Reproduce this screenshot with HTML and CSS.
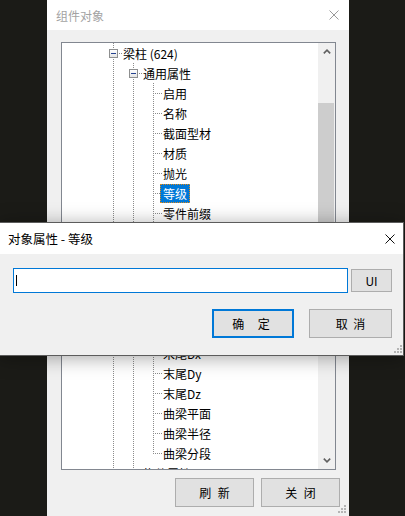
FILE: index.html
```html
<!DOCTYPE html>
<html lang="zh">
<head>
<meta charset="utf-8">
<title>对象属性</title>
<link rel="stylesheet" href="styles.css">
</head>
<body>
<div class="desk">
  <section class="win win-bg">
    <header class="titlebar">
      <span class="title">组件对象</span>
      <svg class="xbtn" width="10" height="10" viewBox="0 0 10 10"><path d="M0.5 0.5L9.5 9.5M9.5 0.5L0.5 9.5" stroke="#9a9a9a" stroke-width="1" fill="none"/></svg>
    </header>
    <div class="bg-body">
      <div class="tree">
        <div class="rows">
          <div class="row"><span class="c bx"><i class="exp"></i></span><span class="lbl">梁柱 (624)</span></div>
          <div class="row"><span class="c v"></span><span class="c bx"><i class="exp"></i></span><span class="lbl">通用属性</span></div>
          <div class="row"><span class="c v"></span><span class="c v"></span><span class="c t"></span><span class="lbl">启用</span></div>
          <div class="row"><span class="c v"></span><span class="c v"></span><span class="c t"></span><span class="lbl">名称</span></div>
          <div class="row"><span class="c v"></span><span class="c v"></span><span class="c t"></span><span class="lbl">截面型材</span></div>
          <div class="row"><span class="c v"></span><span class="c v"></span><span class="c t"></span><span class="lbl">材质</span></div>
          <div class="row"><span class="c v"></span><span class="c v"></span><span class="c t"></span><span class="lbl">抛光</span></div>
          <div class="row"><span class="c v"></span><span class="c v"></span><span class="c t"></span><span class="lbl sel">等级</span></div>
          <div class="row"><span class="c v"></span><span class="c v"></span><span class="c t"></span><span class="lbl">零件前缀</span></div>
          <div class="row"><span class="c v"></span><span class="c v"></span><span class="c t"></span><span class="lbl">零件编号</span></div>
          <div class="row"><span class="c v"></span><span class="c v"></span><span class="c t"></span><span class="lbl">构件前缀</span></div>
          <div class="row"><span class="c v"></span><span class="c v"></span><span class="c t"></span><span class="lbl">构件编号</span></div>
          <div class="row"><span class="c v"></span><span class="c v"></span><span class="c t"></span><span class="lbl">起点Dx</span></div>
          <div class="row"><span class="c v"></span><span class="c v"></span><span class="c t"></span><span class="lbl">起点Dy</span></div>
          <div class="row"><span class="c v"></span><span class="c v"></span><span class="c t"></span><span class="lbl">起点Dz</span></div>
          <div class="row"><span class="c v"></span><span class="c v"></span><span class="c t"></span><span class="lbl">末尾Dx</span></div>
          <div class="row"><span class="c v"></span><span class="c v"></span><span class="c t"></span><span class="lbl">末尾Dy</span></div>
          <div class="row"><span class="c v"></span><span class="c v"></span><span class="c t"></span><span class="lbl">末尾Dz</span></div>
          <div class="row"><span class="c v"></span><span class="c v"></span><span class="c t"></span><span class="lbl">曲梁平面</span></div>
          <div class="row"><span class="c v"></span><span class="c v"></span><span class="c t"></span><span class="lbl">曲梁半径</span></div>
          <div class="row"><span class="c v"></span><span class="c v"></span><span class="c l"></span><span class="lbl">曲梁分段</span></div>
          <div class="row"><span class="c v"></span><span class="c bx"><i class="exp plus"></i></span><span class="lbl">构件属性</span></div>
        </div>
        <div class="vscroll">
          <span class="arrow"><svg width="8" height="5" viewBox="0 0 8 5"><path d="M0.8 4.4L4 1.2L7.2 4.4" stroke="#606060" stroke-width="1.6" fill="none"/></svg></span>
          <span class="track"><span class="thumb"></span></span>
          <span class="arrow"><svg width="8" height="5" viewBox="0 0 8 5"><path d="M0.8 0.6L4 3.8L7.2 0.6" stroke="#606060" stroke-width="1.6" fill="none"/></svg></span>
        </div>
      </div>
      <div class="actions">
        <button class="btn wide">刷 新</button>
        <button class="btn wide">关 闭</button>
      </div>
      <svg class="grip" width="9" height="9" viewBox="0 0 9 9"><g fill="#b4b4b4"><rect x="7" y="1" width="2" height="2"/><rect x="4" y="4" width="2" height="2"/><rect x="7" y="4" width="2" height="2"/><rect x="1" y="7" width="2" height="2"/><rect x="4" y="7" width="2" height="2"/><rect x="7" y="7" width="2" height="2"/></g></svg>
    </div>
  </section>

  <section class="win win-fg">
    <header class="titlebar">
      <span class="title">对象属性 - 等级</span>
      <svg class="xbtn" width="10" height="10" viewBox="0 0 10 10"><path d="M0.5 0.5L9.5 9.5M9.5 0.5L0.5 9.5" stroke="#111" stroke-width="1" fill="none"/></svg>
    </header>
    <div class="fg-body">
      <div class="field-row">
        <div class="field"><span class="caret"></span></div>
        <button class="btn ui-btn">UI</button>
      </div>
      <div class="btn-row">
        <button class="btn ok">确 定</button>
        <button class="btn cancel">取 消</button>
      </div>
      <svg class="grip" width="9" height="9" viewBox="0 0 9 9"><g fill="#b4b4b4"><rect x="7" y="1" width="2" height="2"/><rect x="4" y="4" width="2" height="2"/><rect x="7" y="4" width="2" height="2"/><rect x="1" y="7" width="2" height="2"/><rect x="4" y="7" width="2" height="2"/><rect x="7" y="7" width="2" height="2"/></g></svg>
    </div>
  </section>
</div>
</body>
</html>
```

FILE: styles.css
```css
* { box-sizing: border-box; }
html, body { margin: 0; height: 100%; }
body {
  background: #1b1b17;
  font-family: "Noto Sans CJK SC", "Noto Sans", sans-serif;
  font-size: 12px;
  color: #000;
  overflow: hidden;
}
.desk { position: relative; width: 405px; height: 516px; overflow: hidden; }

.win { position: absolute; display: flex; flex-direction: column; background: #f0f0f0; }
.titlebar {
  flex: none;
  display: flex;
  align-items: center;
  justify-content: space-between;
  background: #fff;
}
.xbtn { display: block; }

/* background window */
.win-bg { left: 47px; top: 0; width: 302px; height: 516px; }
.win-bg .titlebar { height: 30px; padding: 0 10px 0 9px; }
.win-bg .title { color: #a3a3a3; }
.bg-body {
  flex: 1;
  position: relative;
  display: flex;
  flex-direction: column;
  padding: 12px 9px 0 14px;
}
.tree {
  width: 275px;
  height: 428px;
  border: 1px solid #828790;
  background: #fff;
  display: flex;
}
.rows { flex: 1; overflow: hidden; padding-left: 41px; }
.row { height: 20px; display: flex; align-items: center; white-space: nowrap; }
.c {
  flex: none;
  width: 20px;
  height: 20px;
  display: flex;
  align-items: center;
  justify-content: center;
}
.c.v {
  background: repeating-linear-gradient(to bottom, #8c8c8c 0 1px, transparent 1px 2px) 10px 0 / 1px 100% no-repeat;
}
.c.t, .c.bx {
  background:
    repeating-linear-gradient(to bottom, #8c8c8c 0 1px, transparent 1px 2px) 10px 0 / 1px 100% no-repeat,
    repeating-linear-gradient(to right, #8c8c8c 0 1px, transparent 1px 2px) 12px 10px / 8px 1px no-repeat;
}
.c.l {
  background:
    repeating-linear-gradient(to bottom, #8c8c8c 0 1px, transparent 1px 2px) 10px 0 / 1px 11px no-repeat,
    repeating-linear-gradient(to right, #8c8c8c 0 1px, transparent 1px 2px) 12px 10px / 8px 1px no-repeat;
}
.exp {
  display: block;
  width: 9px;
  height: 9px;
  border: 1px solid #8e8f8f;
  background: linear-gradient(#24418f, #24418f) center / 5px 1px no-repeat, linear-gradient(#fff, #e4e4e4);
}
.exp.plus {
  background: linear-gradient(#24418f, #24418f) center / 5px 1px no-repeat, linear-gradient(#24418f, #24418f) center / 1px 5px no-repeat, linear-gradient(#fff, #e4e4e4);
}
.lbl { line-height: 19px; height: 19px; padding: 0 3px; margin-left: -3px; }
.lbl.sel { background: #0078d7; color: #fff; outline: 1px dotted #e38a1a; outline-offset: -1px; }

.vscroll { width: 17px; flex: none; display: flex; flex-direction: column; background: #f0f0f0; }
.arrow { height: 17px; flex: none; display: flex; align-items: center; justify-content: center; }
.arrow svg { display: block; }
.track { flex: 1; display: flex; flex-direction: column; }
.thumb { margin-top: 43px; height: 170px; width: 16px; background: #cdcdcd; }

.btn {
  font: inherit;
  color: #000;
  background: #e1e1e1;
  border: 1px solid #adadad;
  padding: 0;
  display: flex;
  align-items: center;
  justify-content: center;
}
.actions { display: flex; justify-content: flex-end; gap: 7px; margin-top: 8px; }
.btn.wide { width: 79px; height: 29px; word-spacing: 4px; }

.grip { position: absolute; display: block; }
.bg-body .grip { right: 3px; bottom: 3px; }

/* foreground window */
.win-fg {
  left: -1px;
  top: 222px;
  width: 405px;
  height: 134px;
  border: 1px solid #5c5c5c;
  box-shadow: 0 2px 18px rgba(0, 0, 0, 0.35);
}
.win-fg .titlebar { height: 31px; padding: 0 8px 0 8px; }
.win-fg .title { font-size: 12.5px; }
.fg-body {
  flex: 1;
  position: relative;
  display: flex;
  flex-direction: column;
  padding: 14px 11px 0 13px;
}
.field-row { display: flex; align-items: center; gap: 3px; }
.field {
  flex: 1;
  height: 25px;
  border: 1px solid #0078d7;
  background: #fff;
  padding-left: 2px;
  display: flex;
  align-items: center;
}
.caret { width: 1px; height: 11px; background: #000; }
.ui-btn { width: 41px; height: 23px; }
.btn-row { display: flex; justify-content: flex-end; gap: 15px; margin-top: 16px; }
.btn.ok { width: 82px; height: 29px; border: 2px solid #0078d7; word-spacing: 11px; padding-right: 4px; }
.btn.cancel { width: 83px; height: 29px; word-spacing: 3px; }
.fg-body .grip { right: 1px; bottom: 2px; }
```
